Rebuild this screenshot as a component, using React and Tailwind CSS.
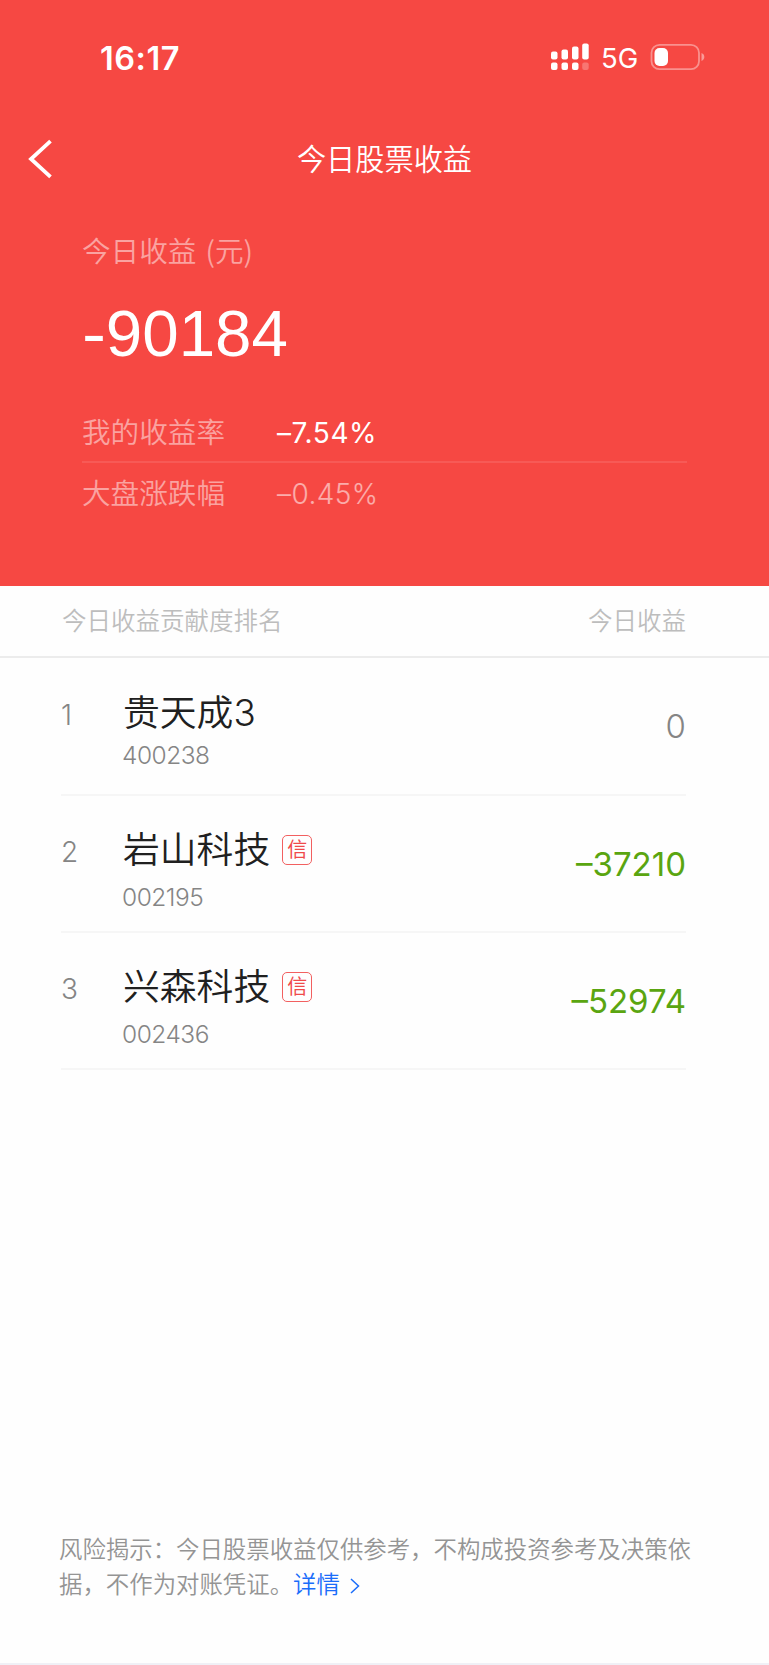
const stocks = [
  { rank: 1, name: '贵天成3', code: '400238', profit: '0', margin: false },
  { rank: 2, name: '岩山科技', code: '002195', profit: '–37210', margin: true },
  { rank: 3, name: '兴森科技', code: '002436', profit: '–52974', margin: true },
]

function StatusBar() {
  return (
    <div className="flex h-[114px] items-center justify-between pl-[100px] pr-[64px]">
      <span className="pt-[4px] text-[32.500px] leading-none font-semibold tracking-[0.5px]">16:17</span>

      <div className="flex items-center">
        <svg width="38" height="28" viewBox="0 0 38 28" fill="white">
          <rect x="0" y="8.5" width="6.5" height="8" rx="2" />
          <rect x="10.5" y="6.5" width="6.5" height="10" rx="2" />
          <rect x="21" y="3.5" width="6.5" height="13" rx="2" />
          <rect x="31.2" y="0.5" width="6.5" height="16" rx="2" />
          <rect x="0" y="19.5" width="6.5" height="7.5" rx="2" />
          <rect x="10.5" y="19.5" width="6.5" height="7.5" rx="2" />
          <rect x="21" y="19.5" width="6.5" height="7.5" rx="2" />
          <rect x="31.2" y="19.5" width="6.5" height="7.5" rx="2" opacity="0.25" />
        </svg>
        <span className="ml-[12px] w-[37px] pt-[3px] text-[27.500px] leading-none">5G</span>
        <svg className="ml-[12px]" width="55" height="28" viewBox="0 0 55 28">
          <rect x="1.5" y="1.8" width="47.5" height="24.4" rx="8" fill="none" stroke="white" strokeOpacity="0.4" strokeWidth="1.8" />
          <rect x="4.5" y="5" width="13.5" height="18" rx="5" fill="white" />
          <path d="M51.5 10c2 .8 2.8 2.200 2.800 4s-.8 3.200-2.800 4z" fill="white" fillOpacity="0.45" />
        </svg>
      </div>
    </div>
  )
}

function StockRow({ stock }) {
  return (
    <div className="flex h-[137px] border-b-2 border-[#f6f6f6]">
      <span className="w-[61px] pt-[42px] text-[28px] leading-[28px] font-light text-[#858585]">{stock.rank}</span>
      <div className="flex-1">
        <div className="mt-[29px] flex h-[50px] items-center">
          <span className="pl-px text-[36.8px] leading-[50px] font-[350] text-[#202020]">{stock.name}</span>
          {stock.margin && (
            <span className="ml-[12px] flex h-[30px] w-[30px] items-center justify-center rounded-[5px] border-[1.500px] border-[#f26060] text-[20px] leading-none text-[#f04a4a]">
              信
            </span>
          )}
        </div>
        <div className={stock.margin ? 'mt-[10px] text-[24.500px] leading-[24px] font-light tracking-[-0.5px] text-[#858585]' : 'mt-[5px] text-[24.500px] leading-[24px] font-light tracking-[-0.5px] text-[#858585]'}>
          {stock.code}
        </div>
      </div>
      <span className={stock.profit === '0' ? 'pt-[50px] text-[33px] leading-[34px] font-light text-[#858585]' : 'pt-[51px] text-[33px] leading-[34px] font-normal text-[#5aa510]'}>
        {stock.profit}
      </span>
    </div>
  )
}

export default function App() {
  return (
    <div className="flex h-[1665px] w-[769px] flex-col overflow-hidden border-b-2 border-[#f0f0f6] bg-[#fefefe] font-['Inter','Noto_Sans_CJK_SC',sans-serif] whitespace-nowrap">
      <div className="h-[586px] shrink-0 bg-[#f64843] text-white">
        <StatusBar />

        <div className="relative flex h-[90px] items-center justify-center">
          <svg className="absolute left-[27px] top-[25px]" width="26" height="40" viewBox="0 0 26 40" fill="none" stroke="white" strokeWidth="3.8">
            <path d="M23.5 2.200 4 20l19.500 17.800" />
          </svg>
          <h1 className="pt-[2px] text-[29.200px] leading-none font-[350]">今日股票收益</h1>
        </div>

        <div className="pl-[82px] pr-[82px]">
          <div className="mt-[28px] h-[36px] text-[28.600px] leading-[36px] font-[350] text-white/50">
            今日收益 <span className="ml-px font-['Noto_Sans_CJK_SC']">(元)</span>
          </div>
          <div className="mt-[33px] flex h-[66px] font-['Liberation_Sans'] text-[65.500px] leading-[66px]">
            <span className="mr-[2px] origin-left scale-x-110">-</span>
            <span>90184</span>
          </div>
          <div className="mt-[46px] flex h-[50px] border-b-2 border-white/10">
            <span className="w-[195px] text-[28.600px] leading-[39px] font-[350] text-white/50">我的收益率</span>
            <span className="text-[28px] leading-[40px] tracking-[0.6px]">–7.54%</span>
          </div>
          <div className="mt-[10px] flex h-[40px]">
            <span className="w-[195px] text-[28.600px] leading-[41px] font-[350] text-white/50">大盘涨跌幅</span>
            <span className="text-[28px] leading-[42px] font-light tracking-[0.4px] text-white/55">–0.45%</span>
          </div>
        </div>
      </div>

      <div className="flex h-[72px] shrink-0 items-center justify-between border-b-2 border-[#ececec] pl-[62px] pr-[83px] text-[24.500px] font-[350] text-[#bdbdbd]">
        <span>今日收益贡献度排名</span>
        <span>今日收益</span>
      </div>

      <div className="mt-px mr-[83px] ml-[61px]">
        {stocks.map((stock) => (
          <StockRow key={stock.rank} stock={stock} />
        ))}
      </div>

      <div className="mt-auto mb-[61px] ml-[59px] text-[23.420px] leading-[35px] font-[350] text-[#949494]">
        <p>风险揭示：今日股票收益仅供参考，不构成投资参考及决策依</p>
        <p className="flex items-center">
          据，不作为对账凭证。
          <span className="text-[#1b6dfa]">详情</span>
          <svg className="mt-[2px] ml-[10px]" width="10" height="16" viewBox="0 0 10 16" fill="none" stroke="#1b6dfa" strokeWidth="1.5">
            <path d="M1 1l7.500 7L1 15" />
          </svg>
        </p>
      </div>
    </div>
  )
}
